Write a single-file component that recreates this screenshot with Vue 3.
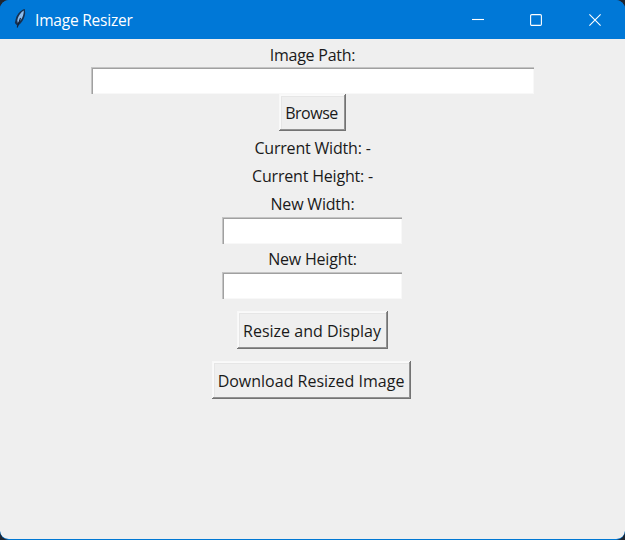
<script setup>
import { ref } from 'vue'

const imagePath = ref('')
const newWidth = ref('')
const newHeight = ref('')
</script>

<template>
  <div class="desktop">
    <div class="window">
      <header class="titlebar">
        <svg class="feather" width="14" height="22" viewBox="0 0 14 22">
          <path d="M11.800 1C8.500 1.500 4.500 5.500 3 10L1.800 15 4.500 18C8.500 15.500 11.500 11 12.200 5z" fill="#17304f" />
          <path d="M10.800 2.500C8 4 5 8 4.300 12.500L4.800 15C8.500 12 10.800 8 10.800 2.500z" fill="#8dbcec" />
          <path d="M7.500 10 4.200 19.500" fill="none" stroke="#142136" stroke-width="1.100" />
        </svg>
        <h1 class="title">Image Resizer</h1>
        <div class="controls">
          <svg width="12" height="12" viewBox="0 0 12 12"><path d="M0 5.500h12" /></svg>
          <svg width="12" height="12" viewBox="0 0 12 12"><rect x=".6" y=".6" width="10.800" height="10.800" rx="1.200" /></svg>
          <svg width="12" height="12" viewBox="0 0 12 12"><path d="M.4.4l11.200 11.200M11.600.4.4 11.600" /></svg>
        </div>
      </header>
      <main class="content">
        <label class="label first" for="path"><span class="t-path">Image Path:</span></label>
        <input id="path" v-model="imagePath" class="entry wide" />
        <button class="button browse"><span class="t-browse">Browse</span></button>
        <div class="label"><span>Current Width: -</span></div>
        <div class="label"><span>Current Height: -</span></div>
        <label class="label" for="w"><span>New Width:</span></label>
        <input id="w" v-model="newWidth" class="entry" />
        <label class="label first" for="h"><span>New Height:</span></label>
        <input id="h" v-model="newHeight" class="entry" />
        <button class="button resize">Resize and Display</button>
        <button class="button download">Download Resized Image</button>
      </main>
    </div>
  </div>
</template>

<style>
body { margin: 0; overflow: hidden; }
</style>

<style scoped>
.desktop {
  width: 625px;
  height: 540px;
  background: #202630;
  font-family: "Open Sans", "Noto Sans", sans-serif;
  font-size: 16px;
  color: #1a1a1a;
}
.window {
  box-sizing: border-box;
  height: 540px;
  display: flex;
  flex-direction: column;
  border-bottom: 1px solid #0078d4;
  border-radius: 9px;
  overflow: hidden;
  background: #0078d7;
}
.titlebar {
  flex: none;
  box-sizing: border-box;
  height: 39px;
  display: flex;
  align-items: center;
  padding: 0 24px 0 13px;
  background: #0078d7;
  color: #fff;
}
.feather { flex: none; margin: 0 8px 2px 0; }
.title {
  margin: 0;
  padding-top: 1px;
  font-size: 15.500px;
  font-weight: 400;
  line-height: 20px;
  letter-spacing: -0.200px;
  white-space: nowrap;
}
.controls { margin-left: auto; display: flex; gap: 47px; }
.controls svg { fill: none; stroke: #fff; stroke-width: 1.100; }
.controls svg:nth-child(2) { margin: 0 0 0 -1px; }
.content {
  flex: 1;
  display: flex;
  flex-direction: column;
  align-items: center;
  background: #efefef;
  border-radius: 0 0 8px 8px;
}
.label {
  flex: none;
  height: 28.330px;
  display: flex;
  align-items: center;
  justify-content: center;
  line-height: 20px;
  letter-spacing: -0.190px;
  white-space: nowrap;
}
.label.first { height: 28px; }
.label span { padding-top: 3px; }
.label .t-path { padding-top: 4px; letter-spacing: -0.250px; }
.entry {
  flex: none;
  box-sizing: border-box;
  width: 180px;
  height: 27px;
  margin: 0 1px 0 0;
  padding: 2px;
  border: 0;
  border-radius: 0;
  outline: 0;
  background: #fff;
  box-shadow: inset 1px 1px #c4c4c4, inset 2px 2px #a0a0a0, inset -1px -1px #f8f8f8;
  font: inherit;
}
.entry.wide { width: 443px; margin-right: 0; }
.button {
  flex: none;
  box-sizing: border-box;
  height: 38px;
  margin: 0;
  padding: 2px 0 0;
  border: 0;
  border-radius: 0;
  background: #efefef;
  box-shadow: inset -1px -1px #737373, inset 1px 1px #f8f8f8, inset -2px -2px #929292, inset 2px 2px #fafafa, inset 3px 3px #e6e6e6;
  font: inherit;
  color: inherit;
  white-space: nowrap;
}
.browse { width: 67px; height: 37px; margin: 0 1px 1px 0; padding: 0 1px 0 0; }
.t-browse { letter-spacing: -0.500px; }
.resize { width: 151px; margin-top: 12px; padding-right: 1px; }
.download { width: 199px; margin: 12px 2px 0 0; padding-right: 1px; }
</style>
